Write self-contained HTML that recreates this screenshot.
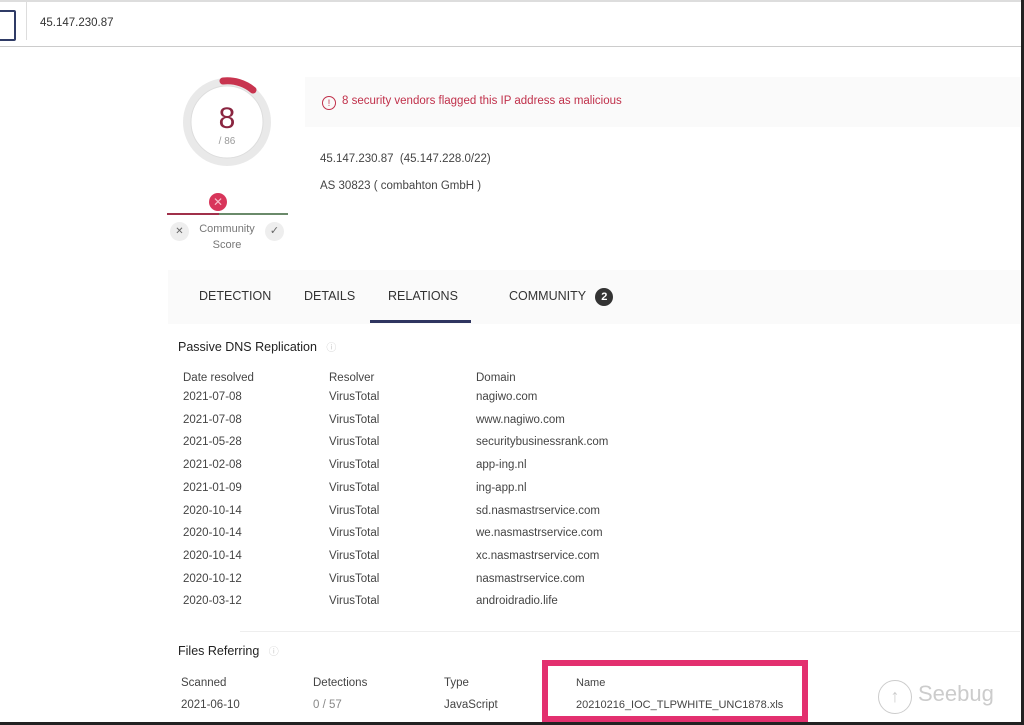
<!DOCTYPE html>
<html><head><style>
body{margin:0;width:1024px;height:725px;background:#fff;position:relative;overflow:hidden;font-family:"Liberation Sans",sans-serif;color:#333}
.a{position:absolute;white-space:nowrap}
.t{font-size:11.5px;color:#444}
</style></head><body>
<div class="a" style="left:0;top:0;width:1024px;height:47px;border-top:2px solid #ddd;border-bottom:1px solid #ccc;box-sizing:border-box"></div>
<div class="a" style="left:-6px;top:10px;width:18px;height:27px;border:2px solid #2f3b66;border-radius:2px"></div>
<div class="a" style="left:26px;top:2px;width:1px;height:38px;background:#ddd"></div>
<div class="a t" style="left:40px;top:17px;font-size:11.5px;color:#333">45.147.230.87</div>
<div class="a" style="left:1021px;top:0;width:3px;height:725px;background:#222"></div>
<div class="a" style="left:0;top:722px;width:1024px;height:3px;background:#222"></div>
<div class="a" style="left:305px;top:77px;width:715px;height:50px;background:#fafafa"></div>
<div class="a" style="left:168px;top:270px;width:852px;height:54px;background:#fafafa"></div>
<svg class="a" style="left:170px;top:64px" width="115" height="120">
<circle cx="57" cy="58" r="44" fill="#e9e9e9"/>
<circle cx="57" cy="58" r="36" fill="#fff" stroke="#ddd" stroke-width="1"/>
<path d="M53 17 A41 41 0 0 1 83 26" stroke="#c8344f" stroke-width="7" fill="none" stroke-linecap="round"/>
<text x="57" y="64" text-anchor="middle" font-size="30" fill="#8a2540" font-family="Liberation Sans">8</text>
<text x="57" y="80" text-anchor="middle" font-size="10" fill="#999" font-family="Liberation Sans">/ 86</text>
</svg>
<div class="a" style="left:167px;top:213px;width:52px;height:2px;background:#a0304a"></div>
<div class="a" style="left:219px;top:213px;width:69px;height:2px;background:#6a8a6a"></div>
<div class="a" style="left:209px;top:193px;width:18px;height:18px;border-radius:50%;background:#d8355a;color:#f8bcc8;font-size:12px;text-align:center;line-height:18px">✕</div>
<div class="a" style="left:170px;top:222px;width:19px;height:19px;border-radius:50%;background:#eee;color:#666;font-size:10px;text-align:center;line-height:19px">✕</div>
<div class="a" style="left:265px;top:222px;width:19px;height:19px;border-radius:50%;background:#eee;color:#666;font-size:11px;text-align:center;line-height:19px">✓</div>
<div class="a" style="left:193px;top:221px;width:68px;text-align:center;font-size:11px;color:#777;line-height:16px">Community<br>Score</div>
<div class="a" style="left:322px;top:95px;font-size:11.5px;color:#c0304a"><span style="display:inline-block;width:12px;height:12px;border:1px solid #c0304a;border-radius:50%;font-size:9px;text-align:center;line-height:12px;vertical-align:-2px;margin-right:6px">!</span>8 security vendors flagged this IP address as malicious</div>
<div class="a t" style="left:320px;top:153px">45.147.230.87 &nbsp;(45.147.228.0/22)</div>
<div class="a t" style="left:320px;top:180px">AS 30823 ( combahton GmbH )</div>
<div class="a" style="left:199px;top:289px;font-size:12.5px;color:#333">DETECTION</div>
<div class="a" style="left:304px;top:289px;font-size:12.5px;color:#333">DETAILS</div>
<div class="a" style="left:388px;top:289px;font-size:12.5px;color:#333">RELATIONS</div>
<div class="a" style="left:370px;top:320px;width:101px;height:3px;background:#2f3560"></div>
<div class="a" style="left:509px;top:288px;font-size:12.5px;color:#333">COMMUNITY <span style="display:inline-block;width:18px;height:18px;border-radius:50%;background:#333;color:#fff;font-size:11px;text-align:center;line-height:18px;margin-left:6px;font-weight:bold">2</span></div>
<div class="a" style="left:178px;top:339px;font-size:12.5px;color:#222">Passive DNS Replication <span style="color:#ccc;font-size:10px;margin-left:6px">ⓘ</span></div>
<div class="a t" style="left:183px;top:372px">Date resolved</div>
<div class="a t" style="left:329px;top:372px">Resolver</div>
<div class="a t" style="left:476px;top:372px">Domain</div>
<div class="a t" style="left:183px;top:386px;line-height:22.7px">2021-07-08<br>2021-07-08<br>2021-05-28<br>2021-02-08<br>2021-01-09<br>2020-10-14<br>2020-10-14<br>2020-10-14<br>2020-10-12<br>2020-03-12</div>
<div class="a t" style="left:329px;top:386px;line-height:22.7px">VirusTotal<br>VirusTotal<br>VirusTotal<br>VirusTotal<br>VirusTotal<br>VirusTotal<br>VirusTotal<br>VirusTotal<br>VirusTotal<br>VirusTotal</div>
<div class="a t" style="left:476px;top:386px;line-height:22.7px">nagiwo.com<br>www.nagiwo.com<br>securitybusinessrank.com<br>app-ing.nl<br>ing-app.nl<br>sd.nasmastrservice.com<br>we.nasmastrservice.com<br>xc.nasmastrservice.com<br>nasmastrservice.com<br>androidradio.life</div>
<div class="a" style="left:240px;top:631px;width:780px;height:1px;background:#eee"></div>
<div class="a" style="left:178px;top:643px;font-size:12.5px;color:#222">Files Referring <span style="color:#ccc;font-size:10px;margin-left:6px">ⓘ</span></div>
<div class="a" style="left:542px;top:660px;width:266px;height:62px;border:6px solid #e3306f;box-sizing:border-box"></div>
<div class="a t" style="left:181px;top:672px;line-height:22px">Scanned<br>2021-06-10</div>
<div class="a t" style="left:313px;top:672px;line-height:22px">Detections<br><span style="color:#888">0 / 57</span></div>
<div class="a t" style="left:444px;top:672px;line-height:22px">Type<br>JavaScript</div>
<div class="a t" style="left:576px;top:672px;line-height:22px;font-size:11px">Name<br>20210216_IOC_TLPWHITE_UNC1878.xls</div>
<div class="a" style="left:878px;top:680px;width:32px;height:32px;border:1.5px solid #ccc;border-radius:50%;color:#ccc;font-size:18px;text-align:center;line-height:30px">↑</div>
<div class="a" style="left:918px;top:681px;font-size:22px;color:#ccc">Seebug</div>
</body></html>
